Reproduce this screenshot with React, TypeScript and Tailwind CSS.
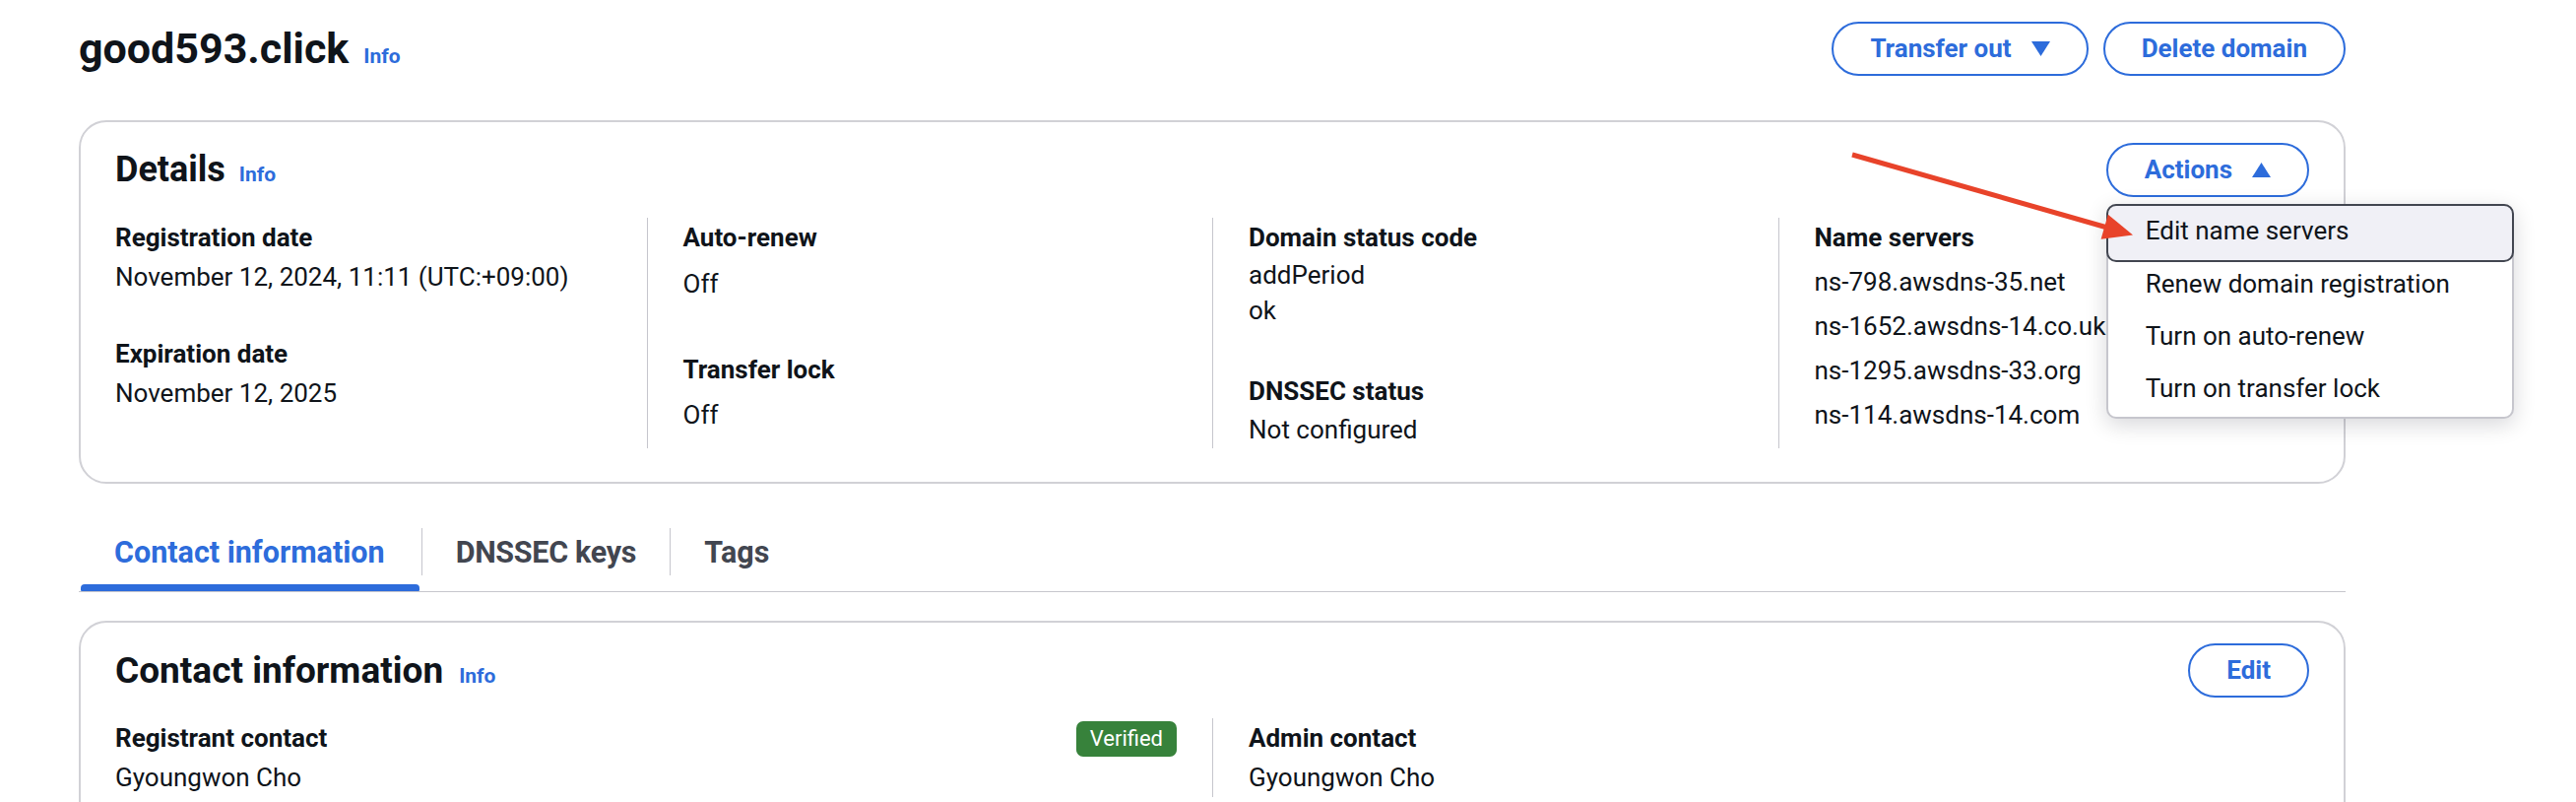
import React from "react";

const BLUE = "text-[#2d6cdb]";

function Caret({ up = false }: { up?: boolean }) {
  return (
    <svg width="19" height="15" viewBox="0 0 19 15" className="shrink-0">
      {up ? (
        <polygon points="9.5,0 19,15 0,15" fill="#2d6cdb" />
      ) : (
        <polygon points="0,0 19,0 9.5,15" fill="#2d6cdb" />
      )}
    </svg>
  );
}

function OutlineButton({ children }: { children: React.ReactNode }) {
  return (
    <button className="flex h-[55px] items-center gap-[20px] rounded-full border-2 border-[#2d6cdb] bg-white px-[37px] text-[26px] font-bold text-[#2d6cdb]">
      {children}
    </button>
  );
}

function InfoLink({ className = "" }: { className?: string }) {
  return <a className={`text-[21px] font-bold ${BLUE} ${className}`}>Info</a>;
}

function Label({ children }: { children: React.ReactNode }) {
  return <div className="text-[26px] font-bold leading-[40px]">{children}</div>;
}

const menuItems = [
  "Renew domain registration",
  "Turn on auto-renew",
  "Turn on transfer lock",
];

const nameServers = [
  "ns-798.awsdns-35.net",
  "ns-1652.awsdns-14.co.uk",
  "ns-1295.awsdns-33.org",
  "ns-114.awsdns-14.com",
];

export default function App() {
  return (
    <div className="relative min-h-screen bg-white font-['Roboto',sans-serif] text-[#0f141a]">
      <div className="ml-[80px] w-[2302px] pb-[40px]">
        {/* Page header */}
        <div className="flex items-center justify-between pt-[22px]">
          <div className="flex items-baseline gap-[15px]">
            <h1 className="text-[43px] font-bold leading-[55px]">good593.click</h1>
            <InfoLink />
          </div>
          <div className="flex gap-[15px]">
            <OutlineButton>
              <span>Transfer out</span>
              <Caret />
            </OutlineButton>
            <OutlineButton>Delete domain</OutlineButton>
          </div>
        </div>

        {/* Details */}
        <div className="relative mt-[45px] rounded-[28px] border-2 border-[#d1d1d6] bg-white">
          <div className="flex items-center justify-between px-[35px] pt-[21px]">
            <div className="flex items-baseline gap-[14px]">
              <h2 className="text-[36px] font-bold leading-[55px]">Details</h2>
              <InfoLink />
            </div>
            <div className="relative">
              <OutlineButton>
                <span>Actions</span>
                <Caret up />
              </OutlineButton>
              <div className="absolute left-0 top-[62px] z-10 w-[414px] rounded-[10px] border-2 border-[#c6c6cd] bg-white shadow-[0_6px_22px_rgba(0,7,22,0.16)]">
                <div className="-m-[2px] h-[59px] rounded-[10px] border-2 border-[#424650] bg-[#f0f0f6] pl-[38px] pt-[5px] text-[26px] leading-[40px]">
                  Edit name servers
                </div>
                {menuItems.map((m) => (
                  <div key={m} className="h-[53px] pl-[38px] pt-[4px] text-[26px] leading-[40px]">
                    {m}
                  </div>
                ))}
              </div>
            </div>
          </div>

          <div className="mt-[21px] grid grid-cols-4 pb-[34px] text-[26px]">
            <div className="pl-[35px]">
              <Label>Registration date</Label>
              <div className="leading-[40px]">November 12, 2024, 11:11 (UTC:+09:00)</div>
              <div className="mt-[38px]">
                <Label>Expiration date</Label>
                <div className="leading-[40px]">November 12, 2025</div>
              </div>
            </div>
            <div className="border-l border-[#c6c6cd] pl-[36px]">
              <Label>Auto-renew</Label>
              <div className="mt-[7px] leading-[40px]">Off</div>
              <div className="mt-[47px]">
                <Label>Transfer lock</Label>
                <div className="mt-[6px] leading-[40px]">Off</div>
              </div>
            </div>
            <div className="border-l border-[#c6c6cd] pl-[36px]">
              <Label>Domain status code</Label>
              <div className="leading-[36px]">addPeriod</div>
              <div className="leading-[36px]">ok</div>
              <div className="mt-[44px]">
                <Label>DNSSEC status</Label>
                <div className="leading-[38px]">Not configured</div>
              </div>
            </div>
            <div className="border-l border-[#c6c6cd] pl-[36px]">
              <Label>Name servers</Label>
              <div className="mt-[3px]">
                {nameServers.map((n) => (
                  <div key={n} className="leading-[45px]">
                    {n}
                  </div>
                ))}
              </div>
            </div>
          </div>
        </div>

        {/* Tabs */}
        <div className="mt-[37px] flex border-b border-[#c6c6cd]">
          <div className="flex flex-col">
            <div className="flex h-[65px] items-center pl-[36px] pr-[37px] text-[30.5px] font-bold text-[#2d6cdb]">
              Contact information
            </div>
            <div className="mx-[2px] h-[7px] rounded-b-[1px] rounded-t-[4px] bg-[#2d6cdb]" />
          </div>
          <div className="mt-[8px] h-[48px] w-px bg-[#c6c6cd]" />
          <div className="flex h-[65px] items-center px-[34px] text-[30.5px] font-bold tracking-[-0.3px] text-[#424650]">
            DNSSEC keys
          </div>
          <div className="mt-[8px] h-[48px] w-px bg-[#c6c6cd]" />
          <div className="flex h-[65px] items-center px-[34px] text-[30.5px] font-bold text-[#424650]">
            Tags
          </div>
        </div>

        {/* Contact information */}
        <div className="mt-[29px] rounded-[28px] border-2 border-[#d1d1d6] bg-white">
          <div className="flex items-center justify-between px-[35px] pt-[21px]">
            <div className="flex items-baseline gap-[16px]">
              <h2 className="text-[37px] font-bold leading-[55px]">Contact information</h2>
              <InfoLink />
            </div>
            <OutlineButton>Edit</OutlineButton>
          </div>
          <div className="mt-[21px] grid grid-cols-2 pb-[120px] text-[26px]">
            <div className="pl-[35px] pr-[36px]">
              <div className="flex items-start justify-between">
                <Label>Registrant contact</Label>
                <span className="mt-[3px] rounded-[7px] bg-[#37823b] px-[14px] text-[22px] leading-[36px] text-white">
                  Verified
                </span>
              </div>
              <div className="leading-[40px]">Gyoungwon Cho</div>
            </div>
            <div className="border-l border-[#c6c6cd] pl-[36px]">
              <Label>Admin contact</Label>
              <div className="leading-[40px]">Gyoungwon Cho</div>
            </div>
          </div>
        </div>
      </div>

      {/* Annotation arrow */}
      <svg className="pointer-events-none absolute left-0 top-0 z-20" width="2616" height="814">
        <line x1="1881" y1="157" x2="2140" y2="231" stroke="#e8432a" strokeWidth="5" />
        <polygon points="2166,238.5 2133.6,242.7 2140.8,217.8" fill="#e8432a" />
      </svg>
    </div>
  );
}
